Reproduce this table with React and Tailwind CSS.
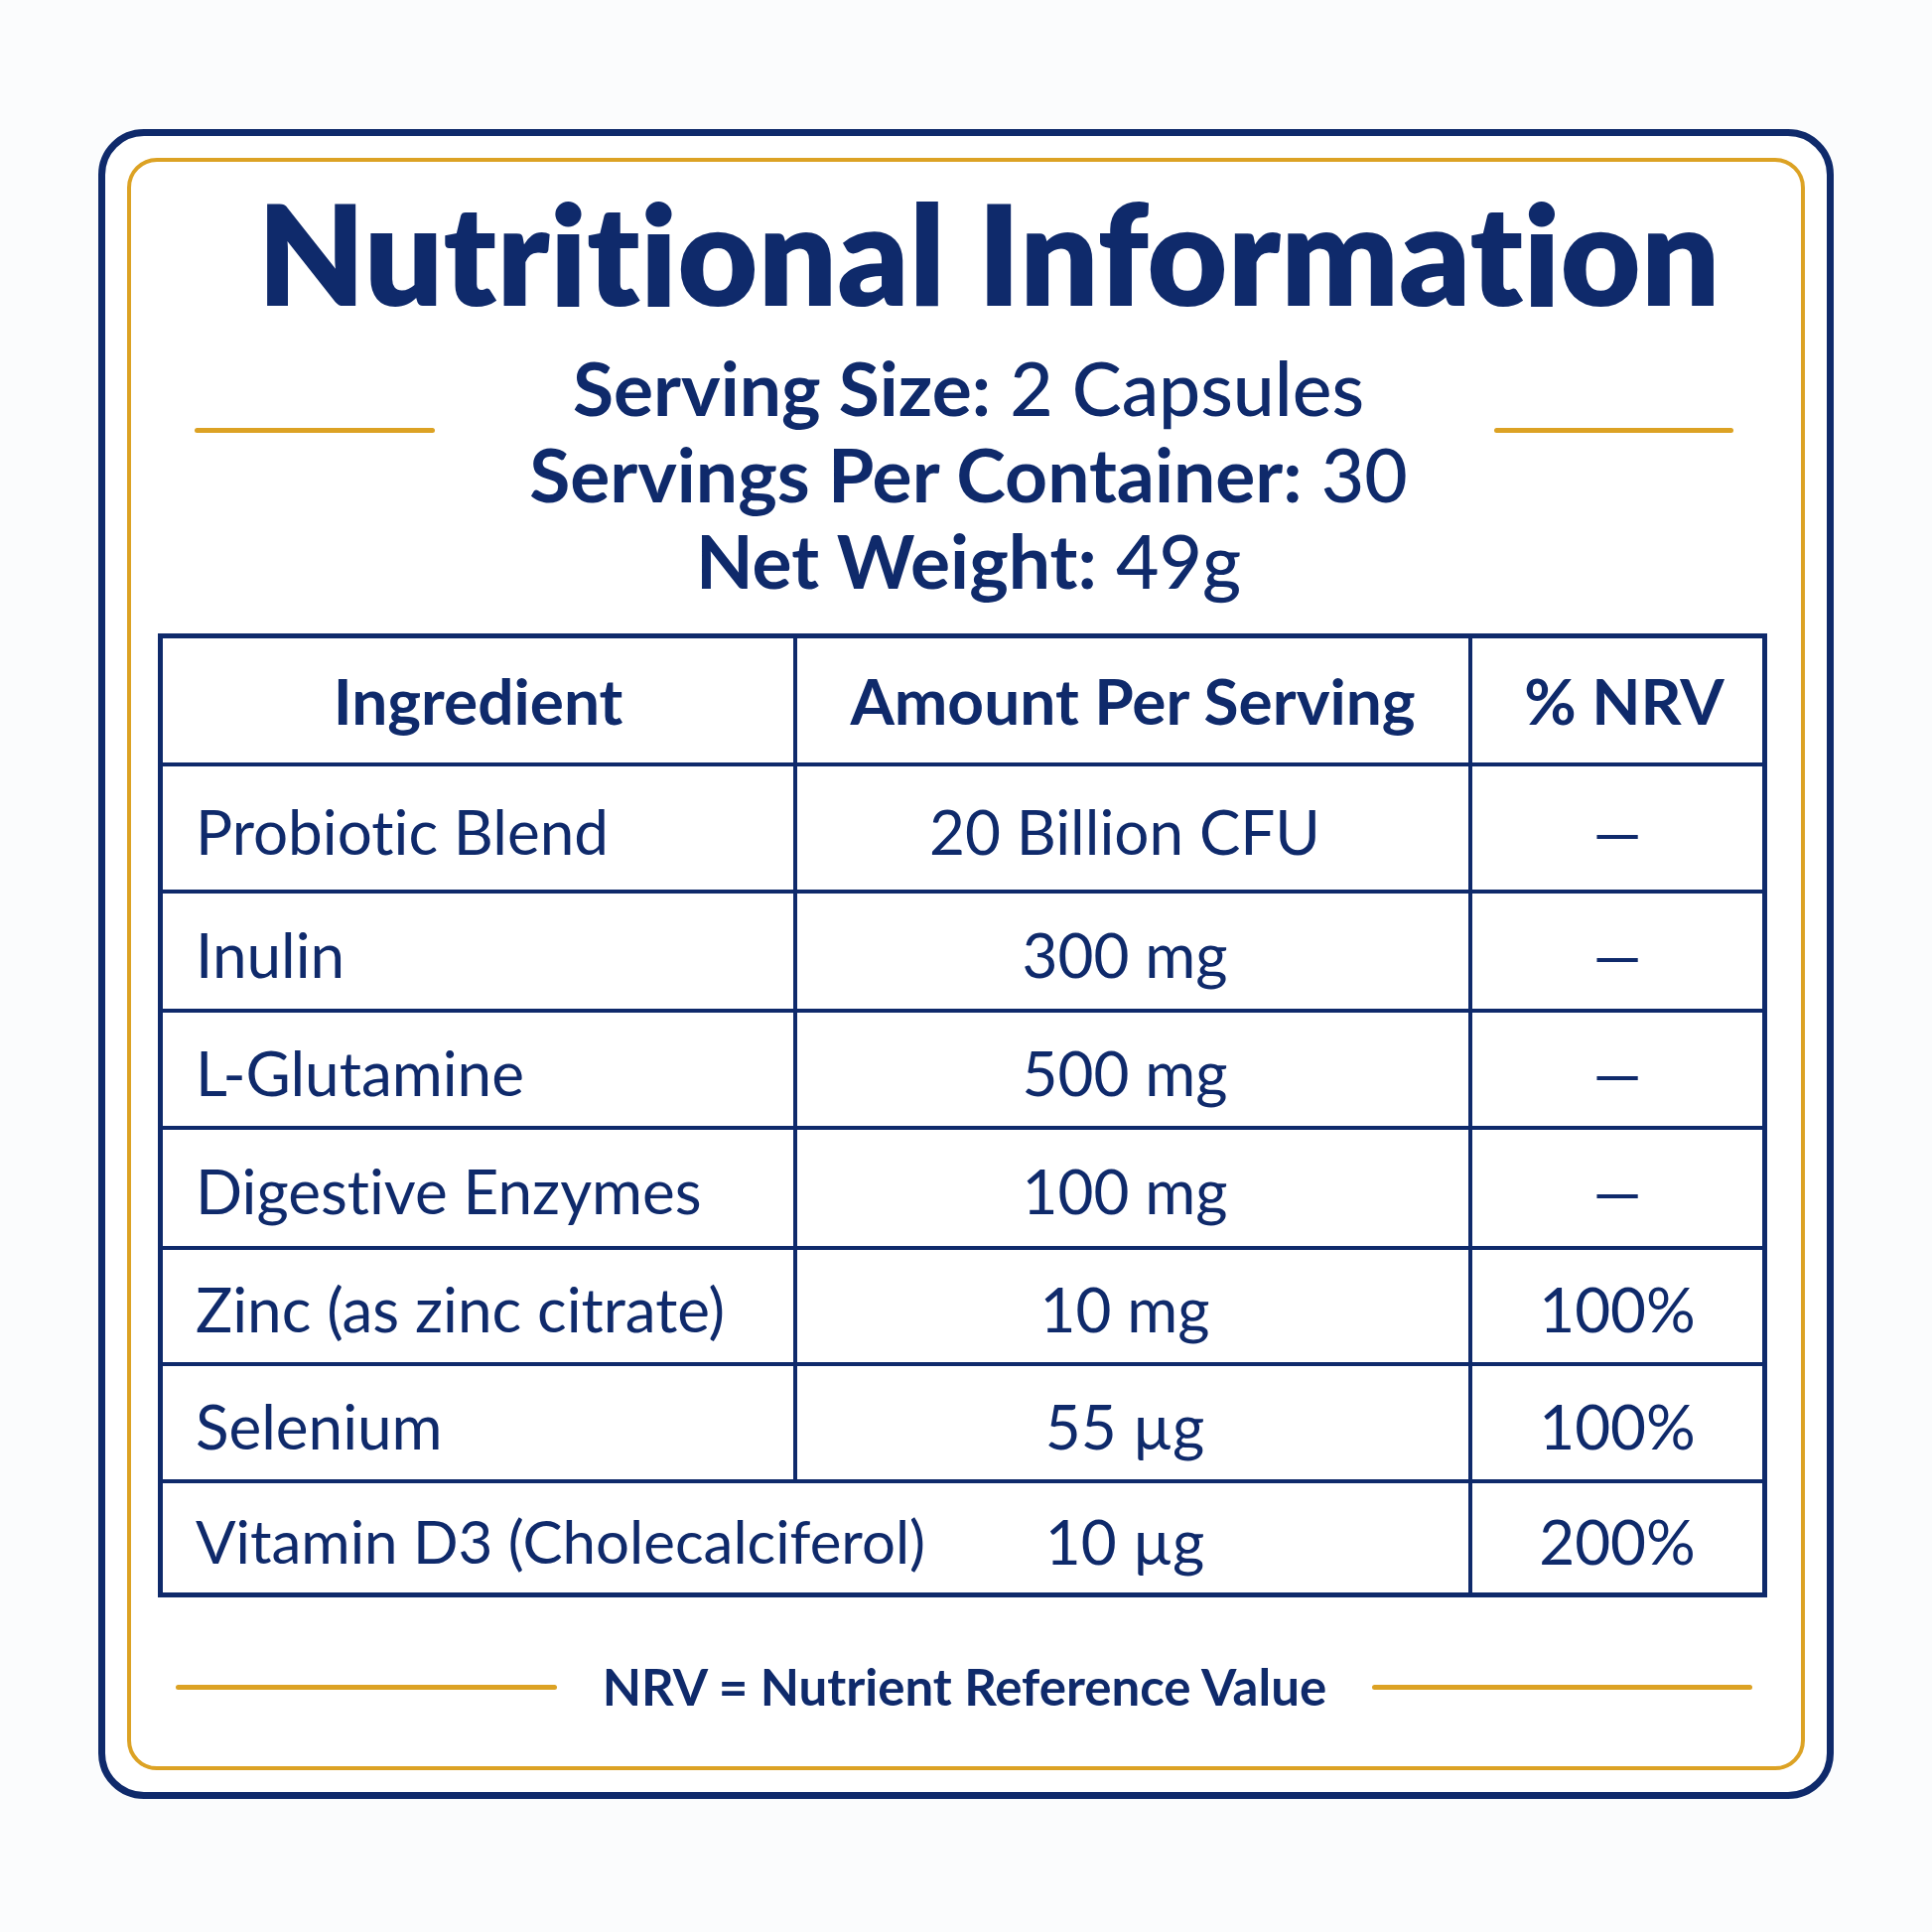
const rows = [
  { name: "Probiotic Blend", amount: "20 Billion CFU", nrv: "—", h: "h-[128px]" },
  { name: "Inulin", amount: "300 mg", nrv: "—", h: "h-[120px]" },
  { name: "L-Glutamine", amount: "500 mg", nrv: "—", h: "h-[118px]" },
  { name: "Digestive Enzymes", amount: "100 mg", nrv: "—", h: "h-[121px]" },
  { name: "Zinc (as zinc citrate)", amount: "10 mg", nrv: "100%", h: "h-[117px]" },
  { name: "Selenium", amount: "55 µg", nrv: "100%", h: "h-[118px]" },
  { name: "Vitamin D3 (Cholecalciferol)", amount: "10 µg", nrv: "200%", h: "h-[114px]", open: true },
];

function GoldLine({ className = "" }) {
  return <div className={`h-[5px] bg-[#dca224] rounded-full ${className}`} />;
}

export default function App() {
  return (
    <div
      className="w-[1946px] h-[1946px] bg-[#fbfcfd] pt-[130px] pl-[99px] text-[#0f2a6b] [font-variant-ligatures:none]"
      style={{ fontFamily: "Lato, 'Open Sans', sans-serif" }}
    >
      <div className="w-[1748px] h-[1682px] border-[7px] border-[#0f2a6b] rounded-[46px] p-[22px] bg-white">
        <div className="h-full border-[4px] border-[#dca224] rounded-[30px] flex flex-col">
          {/* title */}
          <h1 className="pt-[21px] pl-[46px] text-center text-[140px] leading-none font-extrabold">
            Nutritional Information
          </h1>

          {/* serving info */}
          <div className="flex items-start mt-[23px]">
            <GoldLine className="ml-[64px] mt-[84px] w-[242px]" />
            <div className="flex-1 flex flex-col items-center text-[75px] leading-[87px] pl-[8px]">
              <p><span className="font-bold">Serving Size:</span> <span className="font-medium">2 Capsules</span></p>
              <p><span className="font-bold">Servings Per Container:</span> <span className="font-medium">30</span></p>
              <p><span className="font-bold">Net Weight:</span> <span className="font-medium">49g</span></p>
            </div>
            <GoldLine className="mr-[68px] mt-[84px] w-[241px]" />
          </div>

          {/* table */}
          <div className="mt-[30px] ml-[27px] w-[1621px] border-[5px] border-[#0f2a6b]">
            <div className="grid grid-cols-[639px_680px_1fr] h-[125px] text-[64px] font-bold">
              <div className="flex items-center justify-center border-r-[4px] border-[#0f2a6b]">Ingredient</div>
              <div className="flex items-center justify-center border-r-[4px] border-[#0f2a6b]">Amount Per Serving</div>
              <div className="flex items-center justify-center pl-[14px]">% NRV</div>
            </div>
            {rows.map((r) => (
              <div
                key={r.name}
                className={`grid grid-cols-[639px_680px_1fr] border-t-[4px] border-[#0f2a6b] text-[62px] ${r.h}`}
              >
                <div
                  className={`flex items-center pl-[33px] pt-[6px] whitespace-nowrap ${
                    r.open ? "text-[60px]" : "border-r-[4px] border-[#0f2a6b]"
                  }`}
                >
                  {r.name}
                </div>
                <div className="flex items-center justify-center pr-[16px] pt-[6px] border-r-[4px] border-[#0f2a6b]">
                  {r.amount}
                </div>
                <div className="flex items-center justify-center pt-[6px]">{r.nrv}</div>
              </div>
            ))}
          </div>

          {/* footer */}
          <div className="flex items-center mt-[60px] h-[60px]">
            <GoldLine className="ml-[45px] w-[384px]" />
            <p className="flex-1 text-center text-[51px] font-bold">NRV = Nutrient Reference Value</p>
            <GoldLine className="mr-[49px] w-[383px]" />
          </div>
        </div>
      </div>
    </div>
  );
}
